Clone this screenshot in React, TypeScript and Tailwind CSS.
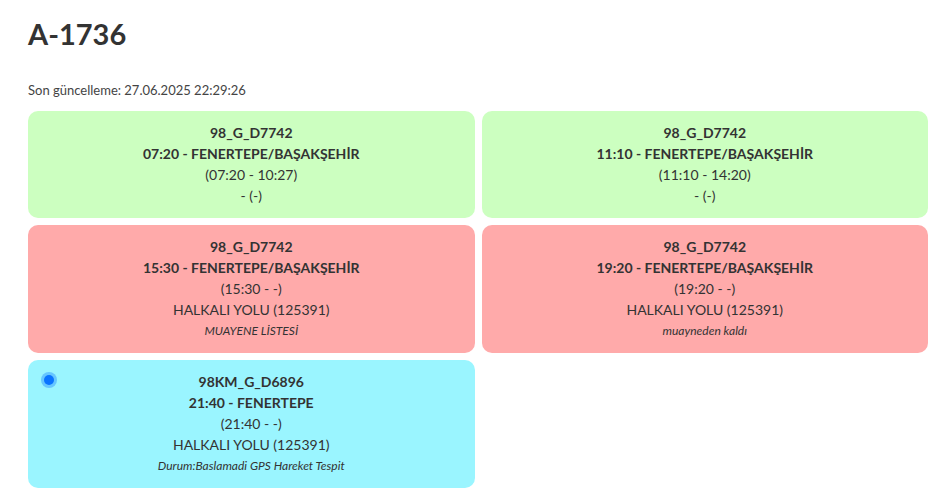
import React from 'react';

interface Trip {
  code: string;
  title: string;
  range: string;
  place: string;
  note?: string;
  tone: 'green' | 'red' | 'cyan';
  live?: boolean;
}

const trips: Trip[] = [
  { code: '98_G_D7742', title: '07:20 - FENERTEPE/BAŞAKŞEHİR', range: '(07:20 - 10:27)', place: '- (-)', tone: 'green' },
  { code: '98_G_D7742', title: '11:10 - FENERTEPE/BAŞAKŞEHİR', range: '(11:10 - 14:20)', place: '- (-)', tone: 'green' },
  { code: '98_G_D7742', title: '15:30 - FENERTEPE/BAŞAKŞEHİR', range: '(15:30 - -)', place: 'HALKALI YOLU (125391)', note: 'MUAYENE LİSTESİ', tone: 'red' },
  { code: '98_G_D7742', title: '19:20 - FENERTEPE/BAŞAKŞEHİR', range: '(19:20 - -)', place: 'HALKALI YOLU (125391)', note: 'muayneden kaldı', tone: 'red' },
  { code: '98KM_G_D6896', title: '21:40 - FENERTEPE', range: '(21:40 - -)', place: 'HALKALI YOLU (125391)', note: 'Durum:Baslamadi GPS Hareket Tespit', tone: 'cyan', live: true },
];

const toneClass = {
  green: 'bg-[#ccffc0]',
  red: 'bg-[#ffaaaa]',
  cyan: 'bg-[#9af5ff]',
};

const TripCard: React.FC<{ trip: Trip }> = ({ trip }) => (
  <div className={`relative rounded-[10px] pt-[11px] pb-[12px] px-4 text-center leading-[21px] ${toneClass[trip.tone]}`}>
    {trip.live && (
      // live GPS marker
      <span className="absolute left-[13px] top-[12px] flex h-[16px] w-[16px] items-center justify-center rounded-full bg-[#66c6ff]">
        <span className="h-[10px] w-[10px] rounded-full bg-[#0a74ff]" />
      </span>
    )}
    <div className="font-bold text-[14px]">{trip.code}</div>
    <div className="font-bold text-[14px]">{trip.title}</div>
    <div className="text-[14px]">{trip.range}</div>
    <div className="text-[14px]">{trip.place}</div>
    {trip.note && <div className="text-[12px] italic leading-[21px]">{trip.note}</div>}
  </div>
);

export default function App() {
  return (
    <div className="min-h-screen bg-white pl-[28px] pr-[12px] pt-[14px] text-[#333]" style={{ fontFamily: 'Lato, "Noto Sans", sans-serif' }}>
      <h1 className="text-[29px] font-bold leading-[40px]">A-1736</h1>
      <p className="mt-[26px] text-[13px] leading-[20px] text-[#444]">Son güncelleme: 27.06.2025 22:29:26</p>
      <div className="mt-[11px] grid grid-cols-2 gap-[7px]">
        {trips.map((t, i) => (
          <TripCard key={i} trip={t} />
        ))}
      </div>
    </div>
  );
}
